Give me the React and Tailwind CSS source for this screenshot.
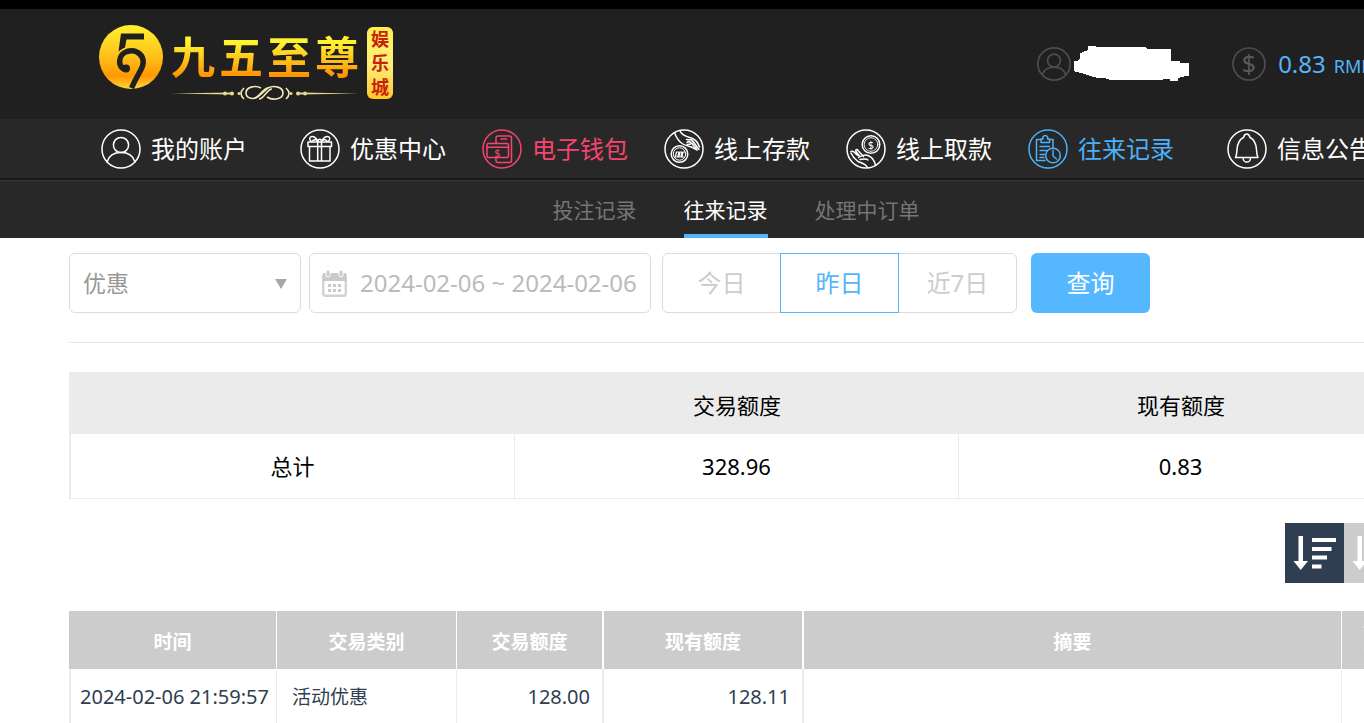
import React, { useState } from "react";

const NavIcon = ({ children }) => (
  <svg
    className="h-10 w-10 shrink-0"
    viewBox="0 0 40 40"
    fill="none"
    stroke="currentColor"
    strokeWidth={1.5}
    strokeLinecap="round"
    strokeLinejoin="round"
    aria-hidden="true"
  >
    <circle cx="20" cy="20" r="19" />
    {children}
  </svg>
);

const Dollar = ({ x, y, size }) => (
  <text
    x={x}
    y={y}
    fontSize={size}
    textAnchor="middle"
    fill="currentColor"
    stroke="none"
    fontFamily="Noto Sans, sans-serif"
  >
    $
  </text>
);

const UserIcon = () => (
  <NavIcon>
    <circle cx="20" cy="16" r="7.6" />
    <path d="M6 33C8 26.5 13.5 23.6 20 23.6S32 26.5 34 33" />
  </NavIcon>
);

const GiftIcon = () => (
  <NavIcon>
    <rect x="8" y="13" width="23.500" height="4.500" />
    <path d="M9.500 17.500V32H30V17.500M17.700 13v19M21.500 13v19" />
    <path d="M18 12.500C16 8 12.500 6.500 10.500 8c-1.500 1.500-.5 3.500 1 4.500M21.500 12.500C23.500 8 27 6.500 29 8c1.500 1.500.5 3.500-1 4.500M18 12.500c0-3 3.500-3 3.500 0M12.500 12c2-2 4-1.500 5.500.5M27 12c-2-2-4-1.500-5.500.5" />
  </NavIcon>
);

const WalletIcon = () => (
  <NavIcon>
    <path d="M14 14V9a2 2 0 0 1 2-2h11.500a2 2 0 0 1 2 2v22.500a2 2 0 0 1-2 2H16a2 2 0 0 1-2-2V29" />
    <path d="M19 10h5.500" />
    <rect x="5" y="14.500" width="21.500" height="14" rx="1.500" />
    <path d="M5 18.300h21.500" />
    <Dollar x={15.5} y={27.5} size={11} />
  </NavIcon>
);

const DepositIcon = () => (
  <NavIcon>
    <circle cx="15.500" cy="25" r="8.300" />
    <circle cx="15.500" cy="25" r="6.200" strokeWidth={1} />
    <path d="M11.500 27l1-4h2.500l-1 4M15 27l1-4h2l-1 4M18 27l1-4h1.500M10.500 28h9.500" strokeWidth={1.2} />
    <path d="M10.500 3.500c1.500 4.500 4 8.500 7.500 11 3 2 6 2.500 9.500 3.500 2 1 4 2.500 5.500 3" />
    <path d="M16 2c2 4.500 6.500 5.500 11.500 7 4 1.500 6.500 4.500 8 9" />
    <path d="M22.500 10.500l5.500.5 5.500 7.500M23 13.500c1.500-1.500 3.500-.5 4.500.5l5 6M23 16c1.500-1.500 2.500 0 3.500-1M28 11.500l7 9" />
  </NavIcon>
);

const WithdrawIcon = () => (
  <NavIcon>
    <circle cx="25" cy="15.500" r="8.800" />
    <circle cx="25" cy="15.500" r="6.800" strokeWidth={0.9} />
    <Dollar x={25} y={19.5} size={11} />
    <path d="M5 22.500c3-1 4 1.500 5.500 3l3 1.500-3.500-4.500c-1-2 1-2.500 2-1l5.500 6" />
    <path d="M5 24c1.500 3.500 3.500 6 7 8.500 3 1.500 7 1.500 9.500 6" />
    <path d="M12.500 28.500c3-2 6-3.500 9.500-2 3.500 1.200 6 3.500 7.500 9.500M14 30.500c3-.5 6-1 8 .5" />
  </NavIcon>
);

const RecordIcon = () => (
  <NavIcon>
    <path d="M17 31.500H8.500v-21h4.500M21.500 10.500H25V19" />
    <path d="M13 10v3.500h8.500V10h-2a2.500 2.500 0 1 0-4.500 0z" />
    <path d="M12 17.500h9.500M12 21.500h7M12 25.500h4.500M12 28.500h4" />
    <circle cx="25" cy="26.500" r="7.300" />
    <path d="M25 21.500v5.500l3.500 3" />
  </NavIcon>
);

const BellIcon = () => (
  <NavIcon>
    <path d="M8.500 28.500H31c-1.200-2-1.200-4-1.500-8-.5-6-2-10-6.500-12-.5-2-1.500-3.500-3.200-3.500s-2.800 1.500-3.300 3.500c-4.500 2-6 6-6.500 12-.3 4-.3 6-1.500 8z" />
    <path d="M16.200 29.500a3.600 3.600 0 0 0 7.200 0" />
  </NavIcon>
);

const navGroups = [
  [{ label: "我的账户", icon: UserIcon }],
  [
    { label: "优惠中心", icon: GiftIcon },
    { label: "电子钱包", icon: WalletIcon, color: "text-[#f8436f]" },
    { label: "线上存款", icon: DepositIcon },
    { label: "线上取款", icon: WithdrawIcon },
    { label: "往来记录", icon: RecordIcon, color: "text-[#4db0f8]" },
  ],
  [{ label: "信息公告", icon: BellIcon }],
];

const subTabs = ["投注记录", "往来记录", "处理中订单"];
const ranges = ["今日", "昨日", "近7日"];

const records = [
  {
    time: "2024-02-06 21:59:57",
    type: "活动优惠",
    amount: "128.00",
    balance: "128.11",
    summary: "",
    note: "",
  },
];

const Logo = () => (
  <a href="#" className="flex shrink-0 items-start" aria-label="九五至尊娱乐城">
    <svg className="h-16 w-16 shrink-0" viewBox="0 0 64 64" aria-hidden="true">
      <defs>
        <linearGradient id="coin" x1="0" y1="0" x2="0" y2="1">
          <stop offset="0" stopColor="#fff22e" />
          <stop offset="0.5" stopColor="#ffc01a" />
          <stop offset="0.8" stopColor="#ff9800" />
          <stop offset="1" stopColor="#ffd83a" />
        </linearGradient>
      </defs>
      <circle cx="32" cy="32" r="32" fill="url(#coin)" />
      <path d="M22 8.500H45V14.500H27.500L26 22.500C24 23.500 21.500 24.500 19.500 26.500z" fill="#202020" />
      <path
        d="M25.500 44.500C18.500 41 19 29.500 28 26.500C38 23.500 46.500 31 43.500 41C42 46 38 50.500 32.500 63"
        fill="none"
        stroke="#202020"
        strokeWidth="5.500"
      />
      <circle cx="27" cy="43.500" r="4" fill="#202020" />
    </svg>
    <div className="ml-2 flex flex-col">
      <div className="flex gap-1 pt-1 text-[44px] leading-14 font-bold">
        {["九", "五", "至", "尊"].map((char) => (
          <span
            key={char}
            className="bg-linear-to-b from-[#fff22e] from-25% to-[#ff9000] to-85% bg-clip-text text-transparent"
          >
            {char}
          </span>
        ))}
      </div>
      <svg className="h-4 w-[188px]" viewBox="0 0 188 16" aria-hidden="true">
        <g fill="#e9d98c">
          <path d="M0 8.500L60 7.500v2zM188 8.500L128 7.500v2z" />
          <circle cx="54" cy="8.500" r="2" />
          <circle cx="61" cy="8.500" r="2" />
          <circle cx="68" cy="8.500" r="1.500" />
          <circle cx="120" cy="8.500" r="1.500" />
          <circle cx="127" cy="8.500" r="2" />
          <circle cx="134" cy="8.500" r="2" />
        </g>
        <g fill="none" stroke="#f3e8b8" strokeWidth="1.600">
          <path d="M73 3q-6 5.500 0 11M115 3q6 5.500 0 11" />
          <path d="M90 3c-6-3-15-1-15 5s9 7 13 3l9-8c6-3 15-1 15 5s-10 8-16 4" />
          <path d="M83 13c5 0 9-10 14-10M88 14c5 0 8-10 13-10" />
        </g>
      </svg>
    </div>
    <div className="mt-[2px] ml-2 flex flex-col rounded-md bg-linear-to-b from-[#fff04a] via-[#fff07a] to-[#ffc91d] px-1 text-lg leading-6 font-bold text-[#c8200c]">
      <span>娱</span>
      <span>乐</span>
      <span>城</span>
    </div>
  </a>
);

const CalendarIcon = () => (
  <svg className="h-7 w-[25px] shrink-0" viewBox="0 0 25 28" aria-hidden="true">
    <rect x="1.200" y="5.200" width="22.600" height="21.600" rx="2" fill="#fff" stroke="#d2d2d2" strokeWidth="2.400" />
    <path d="M1 4h23v8H1z" fill="#cacaca" />
    <rect x="4" y="1" width="4" height="7" rx="2" fill="#cacaca" stroke="#fff" />
    <rect x="17" y="1" width="4" height="7" rx="2" fill="#cacaca" stroke="#fff" />
    <path
      d="M6 15h3v3H6zM11 15h3v3h-3zM16 15h3v3h-3zM6 20h3v3H6zM11 20h3v3h-3zM16 20h3v3h-3z"
      fill="#cacaca"
    />
  </svg>
);

const SortDescIcon = () => (
  <svg className="h-9 w-11" viewBox="0 0 44 36" fill="#fff" aria-hidden="true">
    <path d="M5.500 1h4.500v25h5L7.700 35 .5 26h5z" />
    <path d="M19 3h24v4H19zM19 12h19.500v4H19zM19 20.500h15v4H19zM19 29.500h9.500v4H19z" />
  </svg>
);

const SortAscIcon = () => (
  <svg className="h-9 w-11" viewBox="0 0 44 36" fill="#fff" aria-hidden="true">
    <path d="M5.500 1h4.500v25h5L7.700 35 .5 26h5z" />
    <path d="M19 3h9.500v4H19zM19 12h15v4H19zM19 20.500h19.500v4H19zM19 29.500h24v4H19z" />
  </svg>
);

const Header = () => (
  <header className="border-t-9 border-black bg-[#202020]">
    <div className="flex h-[110px] items-start justify-between pt-4 pr-[99px] pl-[99px]">
      <Logo />
      <div className="flex items-center pt-[21px]">
        <svg
          className="h-[34px] w-[34px] text-[#4d4d4d]"
          viewBox="0 0 40 40"
          fill="none"
          stroke="currentColor"
          strokeWidth={2}
          aria-hidden="true"
        >
          <circle cx="20" cy="20" r="19" />
          <circle cx="20" cy="16" r="7.600" />
          <path d="M6 33C8 26.500 13.500 23.600 20 23.600S32 26.500 34 33" />
        </svg>
        <svg className="ml-[3px] h-[35px] w-[115px]" viewBox="162 54 345 105" aria-hidden="true">
          <polygon
            fill="#fff"
            shapeRendering="crispEdges"
            points="162,98 174,98 181,90 181,75 196,69 204,66 204,54 228,54 228,57 375,57 384,63 453,63 453,99 480,99 480,104 507,106 507,143 490,146 475,150 475,159 450,159 450,154 429,152 429,156 267,156 267,152 235,150 215,145 200,140 180,134 162,130"
          />
        </svg>
        <svg
          className="ml-[43px] h-[34px] w-[34px] text-[#5a5a5a]"
          viewBox="0 0 34 34"
          fill="none"
          stroke="#4d4d4d"
          strokeWidth={1.7}
          aria-hidden="true"
        >
          <circle cx="17" cy="17" r="16" />
          <Dollar x={17} y={25.5} size={25} />
        </svg>
        <p className="ml-3 flex items-baseline gap-2 text-2xl leading-8 text-[#54b4fc]">
          0.83 <span className="text-lg leading-6">RMB</span>
        </p>
      </div>
    </div>
  </header>
);

const MainNav = () => (
  <nav className="flex h-[61px] gap-[53px] border-b-2 border-[#191919] bg-[#282828] px-[101px]">
    {navGroups.map((group, index) => (
      <div key={index} className="flex gap-9">
        {group.map(({ label, icon: Icon, color }) => (
          <a
            key={label}
            href="#"
            className={`flex items-center gap-[10px] text-2xl whitespace-nowrap ${
              color || "text-white"
            }`}
          >
            <Icon />
            {label}
          </a>
        ))}
      </div>
    ))}
  </nav>
);

const App = () => {
  const [tab, setTab] = useState("往来记录");
  const [range, setRange] = useState("昨日");
  const [dates, setDates] = useState("2024-02-06 ~ 2024-02-06");

  return (
    <div className="overflow-x-clip bg-white font-['Noto_Sans','Noto_Sans_CJK_SC',sans-serif]">
      {/* The content is wider than the window and runs off to the right */}
      <div className="-mr-[108px]">
        <Header />
        <MainNav />

        {/* Sub navigation */}
        <div className="flex h-[58px] justify-center gap-[47px] border-t border-[#383838] bg-[#282828]">
          {subTabs.map((name) => (
            <button
              key={name}
              type="button"
              onClick={() => setTab(name)}
              className={`border-b-4 pt-1 text-[21px] leading-8 ${
                tab === name
                  ? "border-[#54b4fc] text-white"
                  : "border-transparent text-[#757575]"
              }`}
            >
              {name}
            </button>
          ))}
        </div>

        <main className="px-[69px] pt-[15px]">
          {/* Filters */}
          <form
            className="flex border-b border-[#e8e8e8] pb-[29px]"
            onSubmit={(e) => e.preventDefault()}
          >
            <div className="relative">
              <select
                aria-label="交易类别"
                className="h-[60px] w-[232px] appearance-none rounded-md border border-[#dcdcdc] bg-white pl-[13px] text-[23px] text-[#999]"
              >
                <option>优惠</option>
              </select>
              <svg
                className="pointer-events-none absolute top-[26px] right-[14px] h-[10px] w-3"
                viewBox="0 0 12 10"
                aria-hidden="true"
              >
                <path d="M0 0h12L6 10z" fill="#a8a8a8" />
              </svg>
            </div>
            <label className="ml-2 flex h-[60px] w-[342px] items-center gap-[13px] rounded-md border border-[#dcdcdc] pl-3">
              <CalendarIcon />
              <input
                type="text"
                aria-label="日期"
                value={dates}
                onChange={(e) => setDates(e.target.value)}
                className="w-full min-w-0 text-2xl text-[#bbb] outline-none"
              />
            </label>
            <div className="ml-[11px] flex">
              {ranges.map((name) => (
                <button
                  key={name}
                  type="button"
                  onClick={() => setRange(name)}
                  className={`-mr-px h-[60px] w-[119px] border text-2xl first:rounded-l-md last:rounded-r-md ${
                    range === name
                      ? "z-10 border-[#54b4fc] text-[#54b4fc]"
                      : "border-[#dcdcdc] text-[#ccc]"
                  }`}
                >
                  {name}
                </button>
              ))}
            </div>
            <button
              type="submit"
              className="ml-[15px] h-[60px] w-[119px] rounded-md bg-[#55b8ff] text-2xl text-white"
            >
              查询
            </button>
          </form>

          {/* Totals */}
          <table className="mt-[29px] w-full table-fixed border-separate border-spacing-0 border-l-2 border-[#ebebeb] text-center text-[22px] text-black">
            <thead>
              <tr className="h-[62px] bg-[#ebebeb]">
                <th />
                <th className="pt-1 font-normal">交易额度</th>
                <th className="pt-1 font-normal">现有额度</th>
              </tr>
            </thead>
            <tbody>
              <tr className="h-[65px]">
                <td className="border-r border-b border-[#ebebeb]">总计</td>
                <td className="border-r border-b border-[#ebebeb]">328.96</td>
                <td className="border-r border-b border-[#ebebeb]">0.83</td>
              </tr>
            </tbody>
          </table>

          {/* Sort order */}
          <div className="mt-6 flex justify-end">
            <button
              type="button"
              aria-label="降序"
              className="flex h-[60px] w-[59px] items-center justify-center bg-[#303e51]"
            >
              <SortDescIcon />
            </button>
            <button
              type="button"
              aria-label="升序"
              className="flex h-[60px] w-[59px] items-center justify-center bg-[#ccc]"
            >
              <SortAscIcon />
            </button>
          </div>

          {/* Records */}
          <table className="mt-7 w-full table-fixed border-separate border-spacing-0 text-[19px] text-[#303e51]">
            <colgroup>
              <col className="w-[208px]" />
              <col className="w-[180px]" />
              <col className="w-[147px]" />
              <col className="w-[200px]" />
              <col />
              <col className="w-[61px]" />
            </colgroup>
            <thead>
              <tr className="h-[58px] bg-[#ccc] text-white">
                <th className="border-r border-white pt-1">时间</th>
                <th className="border-r border-white pt-1">交易类别</th>
                <th className="border-r-2 border-white pt-1">交易额度</th>
                <th className="border-r-2 border-white pt-1">现有额度</th>
                <th className="border-r border-white pt-1">摘要</th>
                <th className="px-5 leading-6">备注</th>
              </tr>
            </thead>
            <tbody>
              {records.map((row) => (
                <tr key={row.time} className="h-[54px]">
                  <td className="border-r border-l-2 border-[#ebebeb] pt-[2px] pl-[9px] text-xl whitespace-nowrap">
                    {row.time}
                  </td>
                  <td className="border-r border-[#ebebeb] pt-[2px] pl-[15px]">{row.type}</td>
                  <td className="border-r-2 border-[#ebebeb] pt-[2px] pr-3 text-right text-xl">
                    {row.amount}
                  </td>
                  <td className="border-r-2 border-[#ebebeb] pt-[2px] pr-3 text-right text-xl">
                    {row.balance}
                  </td>
                  <td className="border-r border-[#ebebeb]">{row.summary}</td>
                  <td>{row.note}</td>
                </tr>
              ))}
            </tbody>
          </table>
        </main>
      </div>
    </div>
  );
};

export default App;
